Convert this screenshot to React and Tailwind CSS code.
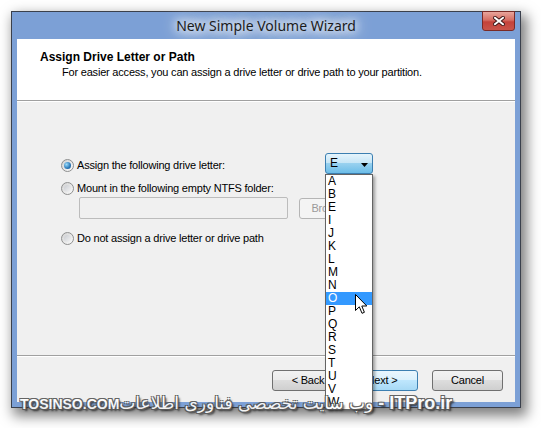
import React from "react";

const letters = ["A", "B", "E", "I", "J", "K", "L", "M", "N", "O", "P", "Q", "R", "S", "T", "U", "V", "W"];

function Radio({ checked }) {
  return (
    <span className="w-[13px] h-[13px] rounded-full border border-[#8e8f8f] bg-[linear-gradient(135deg,#d2d2d2,#fbfbfb)] flex items-center justify-center shrink-0">
      {checked ? (
        <span className="w-[7px] h-[7px] rounded-full bg-[radial-gradient(circle_at_35%_35%,#9bdcfb,#2a78b8_60%,#1b4f82)]" />
      ) : (
        <span className="w-[7px] h-[7px] rounded-full bg-[linear-gradient(135deg,#c9ccd1,#f4f4f4)]" />
      )}
    </span>
  );
}

function Combo() {
  return (
    <div className="relative w-[48px] h-[21px]">
      <div className="w-full h-full border border-[#3c7fb1] rounded-[3px] bg-[linear-gradient(#e5f4fc_0%,#c4e5f6_50%,#98d1ef_50%,#6cbde8_100%)] flex items-center pl-[4px] text-[12px] leading-[13px] text-black">
        E
        <svg className="absolute right-[5px] top-[10px]" width="7" height="4" viewBox="0 0 7 4">
          <path d="M0 0H7L3.5 4Z" fill="#000" />
        </svg>
      </div>
      <div className="absolute left-0 top-[21px] w-[48px] bg-white border border-[#646464] shadow-[2px_2px_3px_rgba(0,0,0,0.35)] z-10">
        {letters.map((l) => (
          <div
            key={l}
            className={
              l === "O"
                ? "h-[13px] leading-[13px] pl-[2px] text-[12px] bg-[#3399ff] text-white"
                : "h-[13px] leading-[13px] pl-[2px] text-[12px] text-black"
            }
          >
            {l}
          </div>
        ))}
      </div>
    </div>
  );
}

function Btn({ children, w, focus, className = "" }) {
  return (
    <div
      className={
        (focus
          ? "border-[#3c7fb1] bg-[linear-gradient(#eaf6fd_0%,#d9f0fc_50%,#bee6fd_50%,#a7d9f5_100%)] "
          : "border-[#707070] bg-[linear-gradient(#f2f2f2_0%,#ebebeb_50%,#dddddd_50%,#cfcfcf_100%)] ") +
        "h-[21px] border rounded-[3px] flex items-center justify-center text-[11px] tracking-[-0.2px] text-black " +
        w +
        " " +
        className
      }
    >
      {children}
    </div>
  );
}

export default function App() {
  return (
    <div className="relative w-[541px] h-[428px] bg-white overflow-hidden pt-[11px] pl-[11px] font-['Liberation_Sans',Arial,sans-serif]">
      {/* window */}
      <div className="relative w-[510px] h-[397px] border border-[#3a404c] bg-[#7ca0d6] shadow-[4px_6px_12px_2px_rgba(0,0,0,0.5)] flex flex-col">
        {/* title bar */}
        <div className="relative h-[27px] flex items-center justify-center">
          <span className="font-['Noto_Sans',sans-serif] text-[14px] text-[#1b1b1b] [text-shadow:0_0_8px_#fff,0_0_12px_#fff,0_0_16px_#fff,0_0_20px_#ffffff]">
            New Simple Volume Wizard
          </span>
          <div className="absolute right-[5px] top-[-1px] w-[33px] h-[20px] border border-[#7a2a26] rounded-b-[3px] bg-[linear-gradient(#e8a59c_0%,#d66d62_45%,#c4423a_55%,#c9544a_100%)] flex items-center justify-center">
            <svg width="12" height="10" viewBox="0 0 12 10">
              <path d="M2 1.8L10 8.2M10 1.8L2 8.2" stroke="#3b1414" strokeWidth="3.8" strokeLinecap="square" />
              <path d="M2 1.8L10 8.2M10 1.8L2 8.2" stroke="#ffffff" strokeWidth="2" strokeLinecap="square" />
            </svg>
          </div>
        </div>

        {/* client */}
        <div className="flex-1 mx-[5px] mb-[5px] bg-[#f0f0f0] flex flex-col text-[11px] leading-[13px] tracking-[-0.2px] text-black">
          {/* header */}
          <div className="h-[62px] bg-white border-b border-[#a0a0a0] pl-[23px] pt-[12px]">
            <div className="text-[12px] font-bold tracking-normal">Assign Drive Letter or Path</div>
            <div className="mt-[2px] pl-[22px]">
              For easier access, you can assign a drive letter or drive path to your partition.
            </div>
          </div>
          <div className="h-px bg-white" />

          {/* body */}
          <div className="flex-1">
            <div className="mt-[51px] pl-[44px] flex items-start">
              <div className="mt-[6px] w-[264px] h-[13px] flex items-center">
                <Radio checked />
                <span className="ml-[3px]">Assign the following drive letter:</span>
              </div>
              <Combo />
            </div>
            <div className="mt-[8px] pl-[44px] h-[13px] flex items-center">
              <Radio />
              <span className="ml-[3px]">Mount in the following empty NTFS folder:</span>
            </div>
            <div className="mt-[2px] pl-[62px] flex items-start">
              <div className="w-[209px] h-[22px] border border-[#bcbcbc] rounded-[2px] bg-[#f0f0f0]" />
              <div className="ml-[11px] mt-[1px] w-[74px] h-[21px] border border-[#b5b5b5] rounded-[3px] bg-[#f4f4f4] flex items-center justify-center pr-[5px] text-[#9a9a9a]">
                Browse...
              </div>
            </div>
            <div className="mt-[13px] pl-[44px] h-[13px] flex items-center">
              <Radio />
              <span className="ml-[3px]">Do not assign a drive letter or drive path</span>
            </div>
          </div>

          {/* footer */}
          <div className="h-[47px] border-t border-[#a0a0a0]">
            <div className="h-px bg-white" />
            <div className="pt-[13px] pr-[12px] flex justify-end">
              <Btn w="w-[72px]">&lt; Back</Btn>
              <Btn w="w-[72px]" focus className="ml-[2px]">Next &gt;</Btn>
              <Btn w="w-[71px]" className="ml-[14px]">Cancel</Btn>
            </div>
          </div>
        </div>
      </div>

      {/* mouse cursor */}
      <svg className="absolute left-[355px] top-[294px] z-20" width="13" height="21" viewBox="0 0 13 21">
        <path d="M0.5 0.5V16.5L4.3 12.8L7 19.3L9.4 18.3L6.8 12H11.8Z" fill="#fff" stroke="#000" strokeWidth="1" strokeLinejoin="miter" />
      </svg>

      {/* watermark */}
      <div className="absolute left-[20px] top-[395px] z-30 flex items-baseline text-white opacity-90 [text-shadow:-1px_-1px_0_#555,1px_-1px_0_#555,-1px_1px_0_#555,1px_1px_0_#555,2px_2px_2px_#222]">
        <span className="text-[14px] leading-[16px] font-bold">TOSINSO.COM</span>
        <span dir="rtl" className="font-['DejaVu_Sans',sans-serif] text-[17px] leading-[16px]">
          وب سایت تخصصی فناوری اطلاعات
        </span>
        <span className="text-[18px] leading-[16px] font-bold ml-[5px]">- ITPro.ir</span>
      </div>
    </div>
  );
}
